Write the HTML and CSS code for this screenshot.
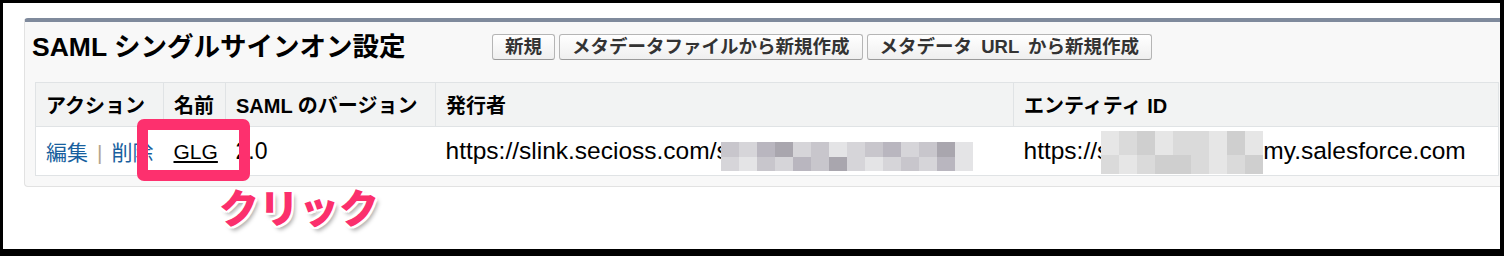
FILE: index.html
```html
<!DOCTYPE html>
<html lang="ja">
<head>
    <meta charset="UTF-8">
    <title>SAML シングルサインオン設定</title>
    <link rel="stylesheet" href="styles.css">
</head>
<body>

    <div class="shot">

        <!-- SAML settings block -->
        <div class="panel">
            <div class="panel-head">
                <h2 class="panel-title">SAML シングルサインオン設定</h2>
                <div class="panel-buttons">
                    <button class="btn">新規</button>
                    <button class="btn">メタデータファイルから新規作成</button>
                    <button class="btn">メタデータ URL から新規作成</button>
                </div>
            </div>

            <table class="list">
                <thead>
                    <tr>
                        <th class="col-action">アクション</th>
                        <th class="col-name">名前</th>
                        <th class="col-version">SAML のバージョン</th>
                        <th class="col-issuer">発行者</th>
                        <th>エンティティ ID</th>
                    </tr>
                </thead>
                <tbody>
                    <tr>
                        <td><a class="action-link">編集</a><span class="sep">|</span><a class="action-link">削除</a></td>
                        <td><a class="name-link">GLG</a></td>
                        <td>2.0</td>
                        <td class="url">https://slink.secioss.com/s<span class="mosaic mosaic-a">
                            <i class="m3"></i><i class="m2"></i><i class="m4"></i><i class="m5"></i><i class="m2"></i><i class="m3"></i><i class="m1"></i><i class="m2"></i><i class="m3"></i><i class="m4"></i><i class="m2"></i><i class="m3"></i><i class="m5"></i><i class="m1"></i>
                            <i class="m2"></i><i class="m1"></i><i class="m3"></i><i class="m2"></i><i class="m4"></i><i class="m3"></i><i class="m5"></i><i class="m2"></i><i class="m1"></i><i class="m2"></i><i class="m3"></i><i class="m2"></i><i class="m4"></i><i class="m1"></i>
                        </span></td>
                        <td class="url">https://s<span class="mosaic mosaic-b">
                            <i class="g1"></i><i class="g2"></i><i class="g3"></i><i class="g1"></i><i class="g2"></i><i class="g2"></i><i class="g1"></i><i class="g3"></i><i class="g1"></i>
                            <i class="g2"></i><i class="g1"></i><i class="g2"></i><i class="g3"></i><i class="g3"></i><i class="g2"></i><i class="g1"></i><i class="g2"></i><i class="g3"></i>
                        </span>my.salesforce.com</td>
                    </tr>
                </tbody>
            </table>
        </div>

        <!-- Annotation over the screenshot -->
        <div class="callout-box"></div>
        <div class="callout-label">クリック</div>
    </div>

</body>
</html>
```

FILE: styles.css
```css
/* Screenshot frame */
body {
    margin: 0;
    background-color: #000;
    font-family: "Liberation Sans", "Noto Sans CJK JP", sans-serif;
}

.shot {
    position: relative;
    margin: 3px 4px 0 3px;
    height: 246px;
    background-color: #fff;
    overflow: hidden;
    padding: 15px 0 0 21px;
    box-sizing: border-box;
}

/* Block panel */
.panel {
    width: 1490px;
    background-color: #f8f8f8;
    border-top: 4px solid #7f8a9c;
    border-left: 1px solid #e2e2e2;
    border-bottom: 1px solid #e2e2e2;
    border-radius: 4px;
    padding: 12px 0 10px 10px;
    box-sizing: border-box;
}

.panel-head {
    display: flex;
    align-items: center;
    height: 26px;
    margin-bottom: 22px;
}

.panel-title {
    width: 460px;
    flex-shrink: 0;
    margin: 0 0 0 -3px;
    font-size: 26.5px;
    font-weight: bold;
    color: #000;
    line-height: 26px;
    white-space: nowrap;
}

.panel-buttons {
    display: flex;
    gap: 4px;
}

.btn {
    height: 26px;
    padding: 0 12px;
    font-family: "Liberation Sans", "Noto Sans CJK JP", sans-serif;
    font-size: 18.5px;
    font-weight: bold;
    color: #333;
    line-height: 24px;
    word-spacing: 4px;
    background: linear-gradient(#fff, #efefef);
    border: 1px solid #b5b5b5;
    border-bottom-color: #9a9a9a;
    border-radius: 3px;
}

/* List table */
.list {
    width: 1464px;
    table-layout: fixed;
    border-collapse: collapse;
    background-color: #fff;
    border: 1px solid #e0e3e5;
}

.list th {
    height: 43px;
    padding: 0 10px;
    background-color: #f2f3f3;
    border-right: 1px solid #e0e3e5;
    border-bottom: 1px solid #e0e3e5;
    font-size: 20px;
    font-weight: bold;
    color: #000;
    text-align: left;
    white-space: nowrap;
}

.list td {
    height: 48px;
    padding: 0 10px;
    font-size: 23px;
    color: #000;
    white-space: nowrap;
}

.list td.url {
    font-size: 24.5px;
}

.col-action { width: 107px; }
.col-name { width: 41px; }
.col-version { width: 189px; }
.col-issuer { width: 557px; }

.action-link {
    color: #185f9e;
    font-size: 21px;
}

.sep {
    color: #b3a58f;
    margin: 0 9px;
    font-size: 21px;
}

.name-link {
    color: #000;
    text-decoration: underline;
    font-size: 21px;
}

/* Blurred parts of the urls */
.mosaic {
    display: inline-grid;
    grid-auto-flow: row;
}

.mosaic i {
    display: block;
}

.mosaic-a {
    grid-template-columns: repeat(14, 18px);
    grid-template-rows: 15px 14px;
    margin: -10px 0 -10px -8px;
    vertical-align: 2px;
}

.mosaic-b {
    grid-template-columns: repeat(9, 18px);
    grid-template-rows: 24px 19px;
    margin: -14px 0 -14px -8px;
    vertical-align: 4px;
}

.m1 { background-color: #e4e4e6; }
.m2 { background-color: #d6d5d9; }
.m3 { background-color: #c8c6cc; }
.m4 { background-color: #b9b6bf; }
.m5 { background-color: #a9a6ae; }

.g1 { background-color: #e6e6e6; }
.g2 { background-color: #dadada; }
.g3 { background-color: #cfcfcf; }

/* Annotation */
.callout-box {
    position: absolute;
    left: 134px;
    top: 116px;
    width: 113px;
    height: 62px;
    box-sizing: border-box;
    border: 11px solid #fd306e;
    border-radius: 7px;
}

.callout-label {
    position: absolute;
    left: 216px;
    top: 183px;
    font-family: "Noto Sans CJK JP", sans-serif;
    font-size: 40px;
    font-weight: 900;
    line-height: 1;
    color: #fb2f6c;
    text-shadow:
        2px 0 0 #fff, -2px 0 0 #fff, 0 2px 0 #fff, 0 -2px 0 #fff,
        2px 2px 0 #fff, -2px 2px 0 #fff, 2px -2px 0 #fff, -2px -2px 0 #fff,
        3px 4px 4px rgba(0, 0, 0, 0.35);
}
```
